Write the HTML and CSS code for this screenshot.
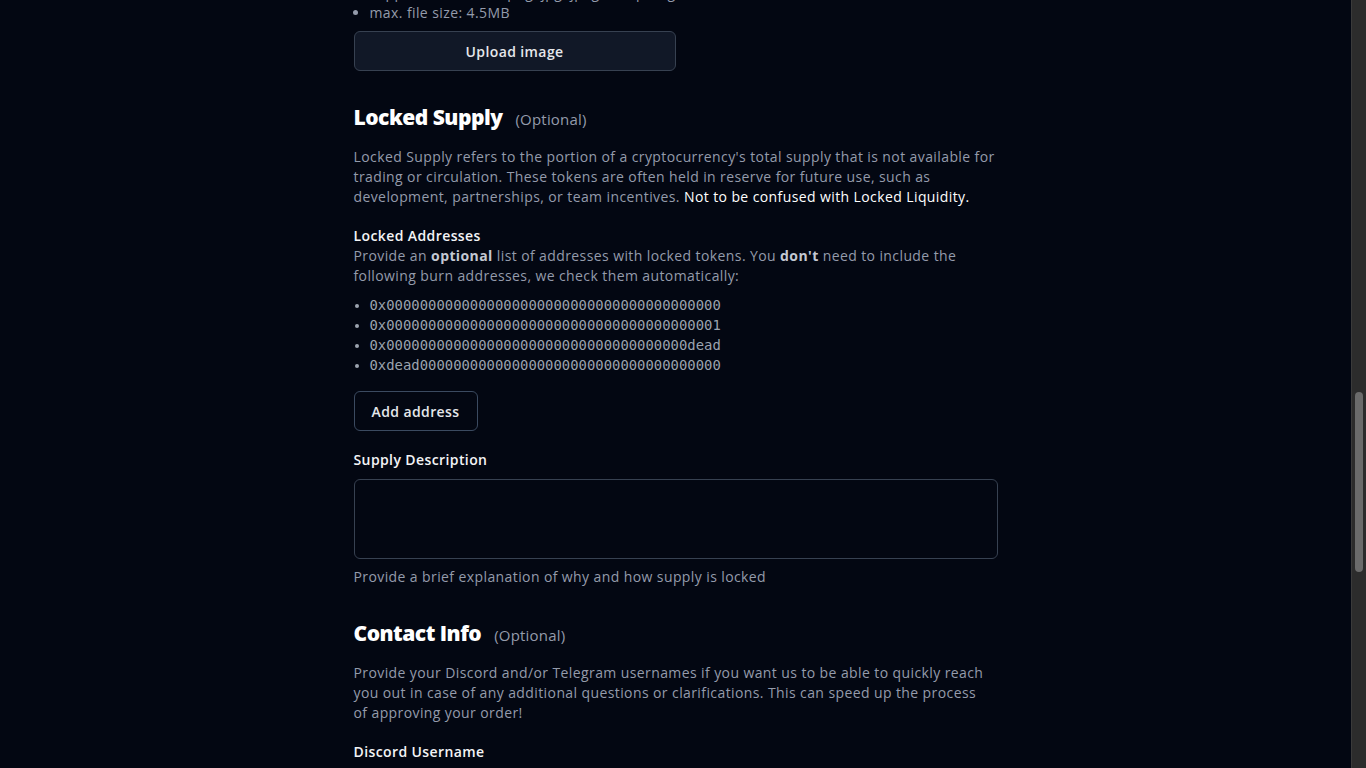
FILE: index.html
```html
<!DOCTYPE html>
<html lang="en">
<head>
<meta charset="utf-8">
<title>Submit token</title>
<link rel="stylesheet" href="styles.css">
</head>
<body>
<main class="form">
  <section class="section">
    <h2 class="section-title">Token Logo</h2>
    <p class="text">Upload the logo of your token. It will be displayed next to the token name.</p>
    <ul class="req-list">
      <li>recommended size: 256x256px</li>
      <li>supported formats: png, jpg, jpeg, webp, svg</li>
      <li>max. file size: 4.5MB</li>
    </ul>
    <button class="btn btn-filled upload-btn" type="button">Upload image</button>
  </section>

  <section class="section">
    <h2 class="section-title">Locked Supply <span class="optional">(Optional)</span></h2>
    <p class="text">Locked Supply refers to the portion of a cryptocurrency's total supply that is not available for trading or circulation. These tokens are often held in reserve for future use, such as development, partnerships, or team incentives. <span class="strong-white">Not to be confused with Locked Liquidity.</span></p>

    <div class="field">
      <div class="label">Locked Addresses</div>
      <p class="text">Provide an <b>optional</b> list of addresses with locked tokens. You <b>don't</b> need to include the following burn addresses, we check them automatically:</p>
      <ul class="addr-list">
        <li>0x0000000000000000000000000000000000000000</li>
        <li>0x0000000000000000000000000000000000000001</li>
        <li>0x000000000000000000000000000000000000dead</li>
        <li>0xdead000000000000000000000000000000000000</li>
      </ul>
      <button class="btn btn-outline" type="button">Add address</button>
    </div>

    <div class="field">
      <label class="label" for="supply-desc">Supply Description</label>
      <textarea id="supply-desc" class="textarea"></textarea>
      <p class="text hint">Provide a brief explanation of why and how supply is locked</p>
    </div>
  </section>

  <section class="section">
    <h2 class="section-title">Contact Info <span class="optional">(Optional)</span></h2>
    <p class="text text-narrow">Provide your Discord and/or Telegram usernames if you want us to be able to quickly reach you out in case of any additional questions or clarifications. This can speed up the process of approving your order!</p>

    <div class="field">
      <label class="label" for="discord">Discord Username</label>
      <input id="discord" class="input" type="text">
    </div>
    <div class="field">
      <label class="label" for="telegram">Telegram Username</label>
      <input id="telegram" class="input" type="text">
    </div>
  </section>

  <section class="section">
    <button class="btn btn-filled submit-btn" type="button">Submit</button>
  </section>
</main>
<div class="scrollbar" aria-hidden="true"><div class="scrollbar-thumb"></div></div>
<script src="script.js"></script>
</body>
</html>
```

FILE: styles.css
```css
html {
  color-scheme: dark;
  background: #030712;
}
body {
  margin: 0;
  padding-right: 15px;
  background: #030712;
  color: #949bab;
  font-family: "Open Sans", "Noto Sans", sans-serif;
  font-size: 14px;
  line-height: 20px;
  letter-spacing: 0.4px;
}
.form {
  width: 644px;
  margin: 0 auto;
  padding: 40px 0 600px;
}
.section {
  margin-top: 30px;
}
.section:first-child {
  margin-top: 0;
}
.section-title {
  margin: 0 0 12px;
  font-size: 21px;
  line-height: 32px;
  font-weight: 800;
  color: #ffffff;
  letter-spacing: -0.5px;
}
.optional {
  margin-left: 8px;
  font-size: 15px;
  font-weight: 400;
  color: #949bab;
  letter-spacing: 0.2px;
}
.text {
  margin: 0;
  color: #949bab;
}
.text-narrow {
  margin-right: 5px;
}
.text b {
  color: #c3c8d2;
  font-weight: 700;
}
.strong-white {
  color: #ffffff;
}
.req-list {
  margin: 8px 0 8px;
  padding-left: 16px;
  color: #949bab;
}
.field {
  margin-top: 19px;
  display: flex;
  flex-direction: column;
  align-items: flex-start;
}
.label {
  display: block;
  color: #f3f4f6;
  font-weight: 600;
  line-height: 20px;
}
.addr-list {
  margin: 9px 0 0;
  padding-left: 16px;
  font-family: "DejaVu Sans Mono", "Liberation Mono", monospace;
  font-size: 13.9px;
  line-height: 20px;
  letter-spacing: 0;
  color: #9ca3af;
}
.btn {
  height: 40px;
  border-radius: 6px;
  font-family: inherit;
  font-size: 14px;
  font-weight: 600;
  letter-spacing: 0.4px;
  color: #e5e7eb;
  cursor: pointer;
}
.btn-filled {
  width: 322px;
  background: #111827;
  border: 1px solid #374151;
}
.btn-outline {
  margin-top: 16px;
  padding: 0 17px;
  background: transparent;
  border: 1px solid #3b4a60;
}
.textarea {
  margin-top: 9px;
  width: 100%;
  height: 80px;
  box-sizing: border-box;
  background: #030712;
  border: 1px solid #374151;
  border-radius: 6px;
  color: #e5e7eb;
  font-family: inherit;
  font-size: 14px;
  padding: 8px 12px;
  resize: none;
}
.input {
  margin-top: 9px;
  width: 100%;
  height: 40px;
  box-sizing: border-box;
  background: #030712;
  border: 1px solid #374151;
  border-radius: 6px;
  color: #e5e7eb;
  font-family: inherit;
  font-size: 14px;
  padding: 0 12px;
}
.hint {
  margin-top: 8px;
}
.scrollbar {
  position: fixed;
  top: 0;
  right: 0;
  width: 14px;
  height: 100vh;
  background: #2c2c2c;
  border-left: 1px solid #3a3a3a;
}
.scrollbar-thumb {
  position: absolute;
  top: 392px;
  left: 3px;
  width: 8px;
  height: 180px;
  border-radius: 4px;
  background: #6b6b6b;
}
```

FILE: script.js
```js
if ('scrollRestoration' in history) { history.scrollRestoration = 'manual'; }
(function () {
  var btn = document.querySelector('.upload-btn');
  var top = btn.getBoundingClientRect().top + window.scrollY - 31;
  window.scrollTo(0, top);
})();
```
